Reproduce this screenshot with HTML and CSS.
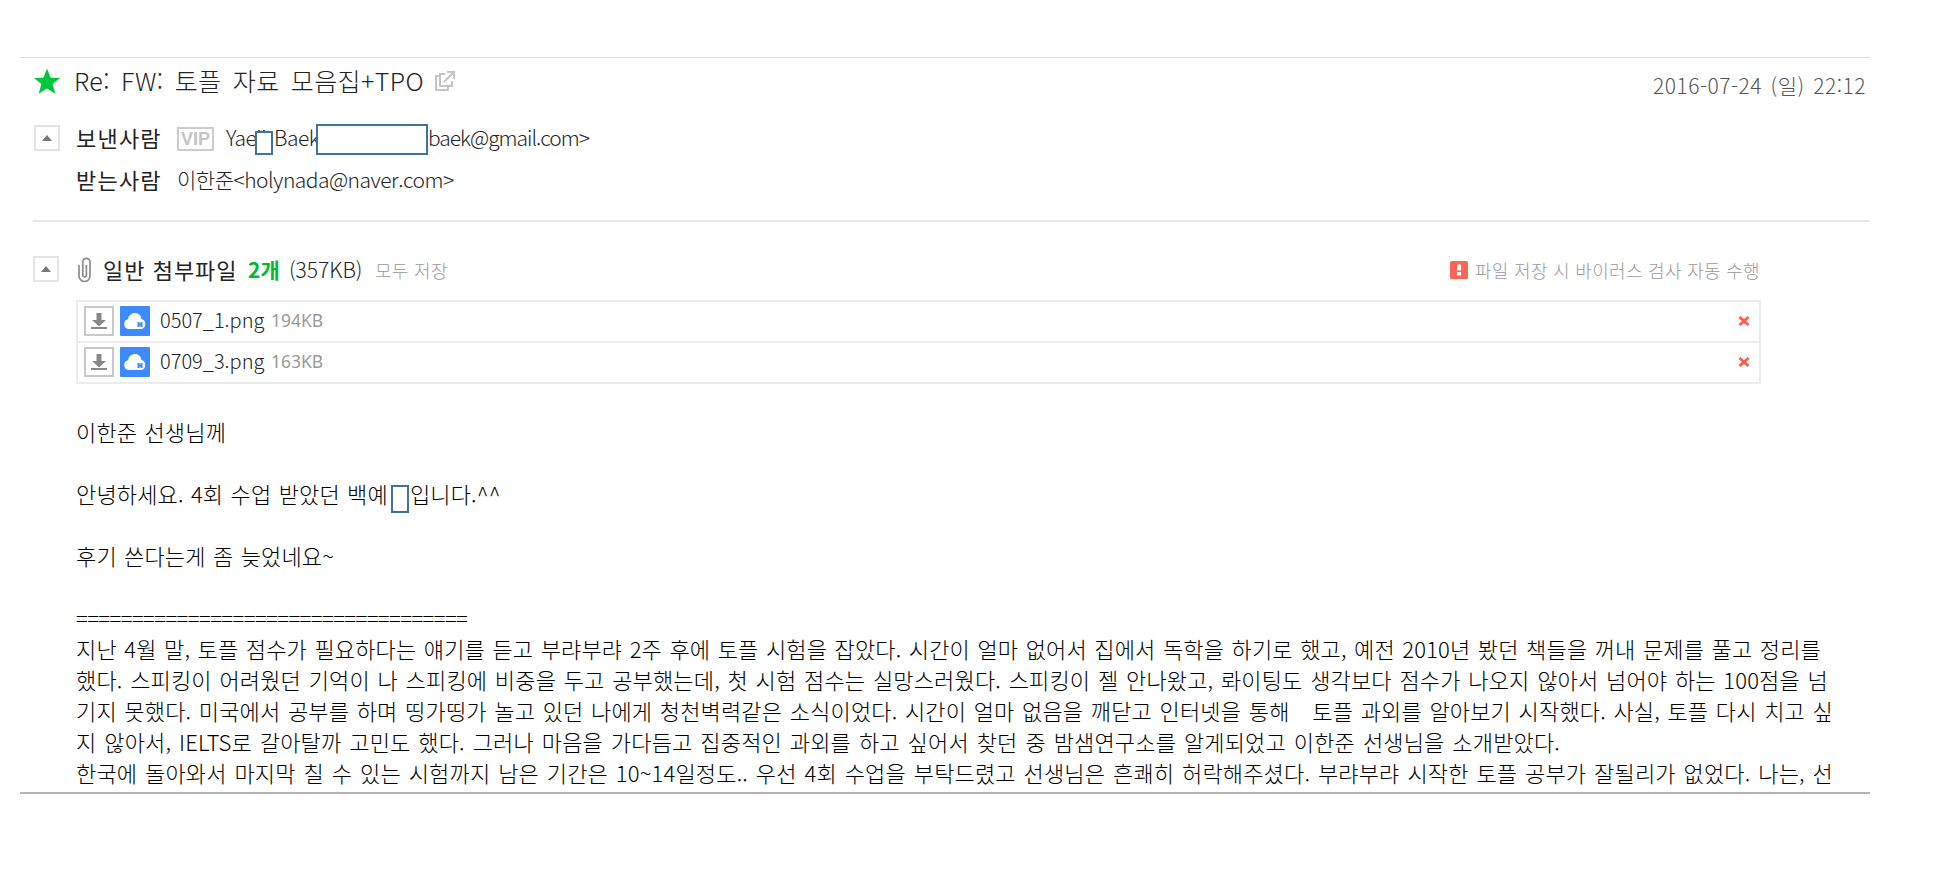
FILE: index.html
```html
<!DOCTYPE html>
<html lang="ko">
<head>
    <meta charset="UTF-8">
    <title>Re: FW: 토플 자료 모음집+TPO</title>
    <link rel="stylesheet" href="styles.css">
</head>
<body>
    <div class="mail">
        <div class="subject">
            <svg class="star" width="28" height="28" viewBox="0 0 28 28"><path d="M14 .5l3.600 9.200 9.600.3-7.600 6 2.800 9.800L14 20.600l-8.400 5.200L8.400 16 .8 10l9.600-.3z" fill="#00c73c"/></svg>
            <h1>Re: FW: 토플 자료 모음집+TPO</h1>
            <svg class="popup" width="22" height="22" viewBox="0 0 22 22" fill="none" stroke="#c4c4c4" stroke-width="2"><path d="M6 6H2v14h12v-4M11 4H6v12h12v-5M10 12l9-9M13 2h7v7"/></svg>
            <span class="date">2016-07-24 (일) 22:12</span>
        </div>
        <div class="people">
            <div class="person">
                <button class="toggle"></button>
                <span class="label">보낸사람</span>
                <span class="vip">VIP</span>
                <span class="addr first">Yaeji</span>
                <span class="addr last">Baek</span>
                <span class="addr mailbox">baek@gmail.com&gt;</span>
                <span class="mask mask-first"></span>
                <span class="mask mask-mail"></span>
            </div>
            <div class="person">
                <span class="label">받는사람</span>
                <span class="addr to">이한준&lt;holynada@naver.com&gt;</span>
            </div>
        </div>
        <div class="attach">
            <div class="attach-head">
                <button class="toggle"></button>
                <svg class="clip" width="16" height="26" viewBox="0 0 16 26" fill="none" stroke="#8c8c8c" stroke-width="1.700"><path d="M2 8v11a5.500 5.500 0 0 0 11 0V5a3.600 3.600 0 0 0-7.200 0v13a1.800 1.800 0 0 0 3.600 0V8"/></svg>
                <span class="title">일반 첨부파일</span>
                <span class="count">2개</span>
                <span class="total">(357KB)</span>
                <span class="save">모두 저장</span>
                <svg class="warn" width="18" height="18" viewBox="0 0 18 18"><rect width="18" height="18" rx="1.500" fill="#ff6454"/><path d="M7 3.500h4v6H7zM7 11h4v3.500H7z" fill="#fff"/></svg>
                <span class="virus">파일 저장 시 바이러스 검사 자동 수행</span>
            </div>
            <div class="files">
                <div class="file">
                    <svg class="down" width="30" height="30" viewBox="0 0 30 30"><rect x="1" y="1" width="28" height="28" fill="#fff" stroke="#c8c8c8" stroke-width="2"/><path d="M12.500 7h5v7h4.500l-7 6.500-7-6.500h4.500zM7 21h16v2H7z" fill="#888"/></svg>
                    <svg class="cloud" width="30" height="30" viewBox="0 0 30 30"><rect width="30" height="30" rx="1" fill="#3d8afe"/><path d="M8.500 23a5 5 0 0 1-.5-9.800C8.500 9.500 11.500 7 15 7s6 2.500 6.500 6A5.200 5.200 0 0 1 21.500 23z" fill="#fff"/><path d="M18.500 16v5M21.500 16v5M18 18.500h4" stroke="#3d8afe" stroke-width="2"/></svg>
                    <span class="name">0507_1.png</span>
                    <span class="size">194KB</span>
                    <svg class="del" width="12" height="10" viewBox="0 0 12 10"><path d="M1.500 1l9 8M10.500 1l-9 8" stroke="#ff5a4a" stroke-width="2.800"/></svg>
                </div>
                <div class="file">
                    <svg class="down" width="30" height="30" viewBox="0 0 30 30"><rect x="1" y="1" width="28" height="28" fill="#fff" stroke="#c8c8c8" stroke-width="2"/><path d="M12.500 7h5v7h4.500l-7 6.500-7-6.500h4.500zM7 21h16v2H7z" fill="#888"/></svg>
                    <svg class="cloud" width="30" height="30" viewBox="0 0 30 30"><rect width="30" height="30" rx="1" fill="#3d8afe"/><path d="M8.500 23a5 5 0 0 1-.5-9.800C8.500 9.500 11.500 7 15 7s6 2.500 6.500 6A5.200 5.200 0 0 1 21.500 23z" fill="#fff"/><path d="M18.500 16v5M21.500 16v5M18 18.500h4" stroke="#3d8afe" stroke-width="2"/></svg>
                    <span class="name">0709_3.png</span>
                    <span class="size">163KB</span>
                    <svg class="del" width="12" height="10" viewBox="0 0 12 10"><path d="M1.500 1l9 8M10.500 1l-9 8" stroke="#ff5a4a" stroke-width="2.800"/></svg>
                </div>
            </div>
        </div>
        <div class="content">
            <p>이한준 선생님께</p>
            <br>
            <p>안녕하세요. 4회 수업 받았던 백예<span class="mask mask-name"></span><span class="after">입니다.^^</span></p>
            <br>
            <p>후기 쓴다는게 좀 늦었네요~</p>
            <br>
            <p class="rule">===================================</p>
            <p class="line l1">지난 4월 말, 토플 점수가 필요하다는 얘기를 듣고 부랴부랴 2주 후에 토플 시험을 잡았다. 시간이 얼마 없어서 집에서 독학을 하기로 했고, 예전 2010년 봤던 책들을 꺼내 문제를 풀고 정리를</p>
            <p class="line l2">했다. 스피킹이 어려웠던 기억이 나 스피킹에 비중을 두고 공부했는데, 첫 시험 점수는 실망스러웠다. 스피킹이 젤 안나왔고, 롸이팅도 생각보다 점수가 나오지 않아서 넘어야 하는 100점을 넘</p>
            <p class="line l3">기지 못했다. 미국에서 공부를 하며 띵가띵가 놀고 있던 나에게 청천벽력같은 소식이었다. 시간이 얼마 없음을 깨닫고 인터넷을 통해 &nbsp; 토플 과외를 알아보기 시작했다. 사실, 토플 다시 치고 싶</p>
            <p class="line l4">지 않아서, IELTS로 갈아탈까 고민도 했다. 그러나 마음을 가다듬고 집중적인 과외를 하고 싶어서 찾던 중 밤샘연구소를 알게되었고 이한준 선생님을 소개받았다.</p>
            <p class="line l5">한국에 돌아와서 마지막 칠 수 있는 시험까지 남은 기간은 10~14일정도.. 우선 4회 수업을 부탁드렸고 선생님은 흔쾌히 허락해주셨다. 부랴부랴 시작한 토플 공부가 잘될리가 없었다. 나는, 선</p>
        </div>
    </div>
</body>
</html>
```
FILE: styles.css
```css
* {
    box-sizing: border-box;
}
body {
    margin: 0;
    padding: 57px 64px 0 20px;
    background: #fff;
    color: #222;
    font-family: "Noto Sans CJK KR", sans-serif;
    font-weight: 300;
}
.mail {
    height: 737px;
    border-top: 1px solid #dcdcdc;
    border-bottom: 2px solid #b4b4b4;
    overflow: hidden;
    white-space: nowrap;
}
svg {
    display: block;
    flex: none;
}
.subject {
    display: flex;
    height: 60px;
    padding: 0 4px 0 13px;
}
.star {
    margin-top: 10px;
}
h1 {
    width: 350px;
    margin: 4px 10px 0 13px;
    font-size: 25px;
    line-height: 36px;
    font-weight: 300;
    letter-spacing: 0.4px;
    text-align-last: justify;
}
.popup {
    margin-top: 12px;
}
.date {
    width: 213px;
    margin: 9px 0 0 auto;
    color: #555;
    font-size: 21px;
    line-height: 36px;
    letter-spacing: 0.5px;
    text-align-last: justify;
}
.people {
    height: 104px;
    margin-left: 13px;
    border-bottom: 2px solid #e8e8e8;
}
.person {
    display: flex;
    position: relative;
    height: 42px;
    line-height: 38px;
    padding-left: 43px;
    font-size: 21px;
}
.toggle {
    flex: none;
    width: 26px;
    height: 26px;
    padding: 0;
    border: 2px solid #e4e4e4;
    background: #fff;
}
.toggle::before {
    content: "";
    display: block;
    width: 0;
    margin: 0 auto;
    border: 5px solid transparent;
    border-top: 0;
    border-bottom: 6px solid #777;
}
.person .toggle {
    margin: 7px 16px 0 -42px;
}
.label {
    width: 101px;
    font-size: 22px;
    font-weight: 400;
    letter-spacing: 1.2px;
}
.vip {
    width: 37px;
    height: 24px;
    margin: 9px 12px 0 0;
    border: 2px solid #ccc;
    color: #c4c4c4;
    font: bold 18px/21px "Liberation Sans", Arial, sans-serif;
    text-align: center;
}
.addr {
    letter-spacing: -0.5px;
}
.first {
    width: 48px;
}
.last {
    width: 154px;
}
.mailbox {
    letter-spacing: -1px;
}
/* covers over private names */
.mask {
    position: absolute;
    background: #fff;
    border: 2px solid #41719c;
}
.mask-first {
    left: 222px;
    top: 13px;
    width: 18px;
    height: 24px;
}
.mask-mail {
    left: 283px;
    top: 6px;
    width: 112px;
    height: 31px;
}
.attach {
    width: 1741px;
    padding: 28px 0 0 13px;
}
.attach-head {
    display: flex;
    height: 50px;
    line-height: 38px;
    font-size: 21px;
}
.attach-head .toggle {
    margin: 6px 18px 0 0;
}
.clip {
    margin: 7px 10px 0 0;
}
.title {
    width: 145px;
    font-size: 22px;
    font-weight: 400;
    letter-spacing: 1px;
}
.count {
    width: 41px;
    color: #00b832;
    font-weight: 700;
}
.total {
    width: 86px;
}
.save, .virus {
    color: #999;
    font-size: 18px;
    line-height: 41px;
    letter-spacing: 0.3px;
}
.virus {
    width: 286px;
}
.warn {
    margin: 11px 7px 0 auto;
}
.files {
    width: 1685px;
    margin-left: 43px;
    border: 2px solid #ececec;
}
.file {
    display: flex;
    align-items: center;
    height: 39px;
    padding: 0 9px 2px 6px;
    font-size: 20px;
}
.file + .file {
    height: 41px;
    border-top: 2px solid #ececec;
}
.cloud {
    margin: 0 10px 0 6px;
}
.name {
    width: 111px;
    line-height: 30px;
    padding-bottom: 2px;
}
.size {
    padding-bottom: 2px;
    color: #999;
    font: 17.5px/30px "Noto Sans", sans-serif;
}
.del {
    margin-left: auto;
}
.content {
    padding: 32px 0 0 56px;
    color: #000;
    font-size: 22px;
    line-height: 31px;
    letter-spacing: 0.15px;
    word-spacing: 1px;
}
.content p {
    position: relative;
    height: 31px;
    margin: 0;
}
.content .rule {
    letter-spacing: -0.59px;
}
.content .line {
    word-spacing: 0;
    text-align-last: justify;
}
.after {
    margin-left: 22px;
}
.mask-name {
    left: 315px;
    top: 7px;
    width: 18px;
    height: 28px;
}
.l1 {
    width: 1745px;
}
.l2 {
    width: 1752px;
}
.l3, .l5 {
    width: 1757px;
}
.l4 {
    width: 1484px;
}
```
